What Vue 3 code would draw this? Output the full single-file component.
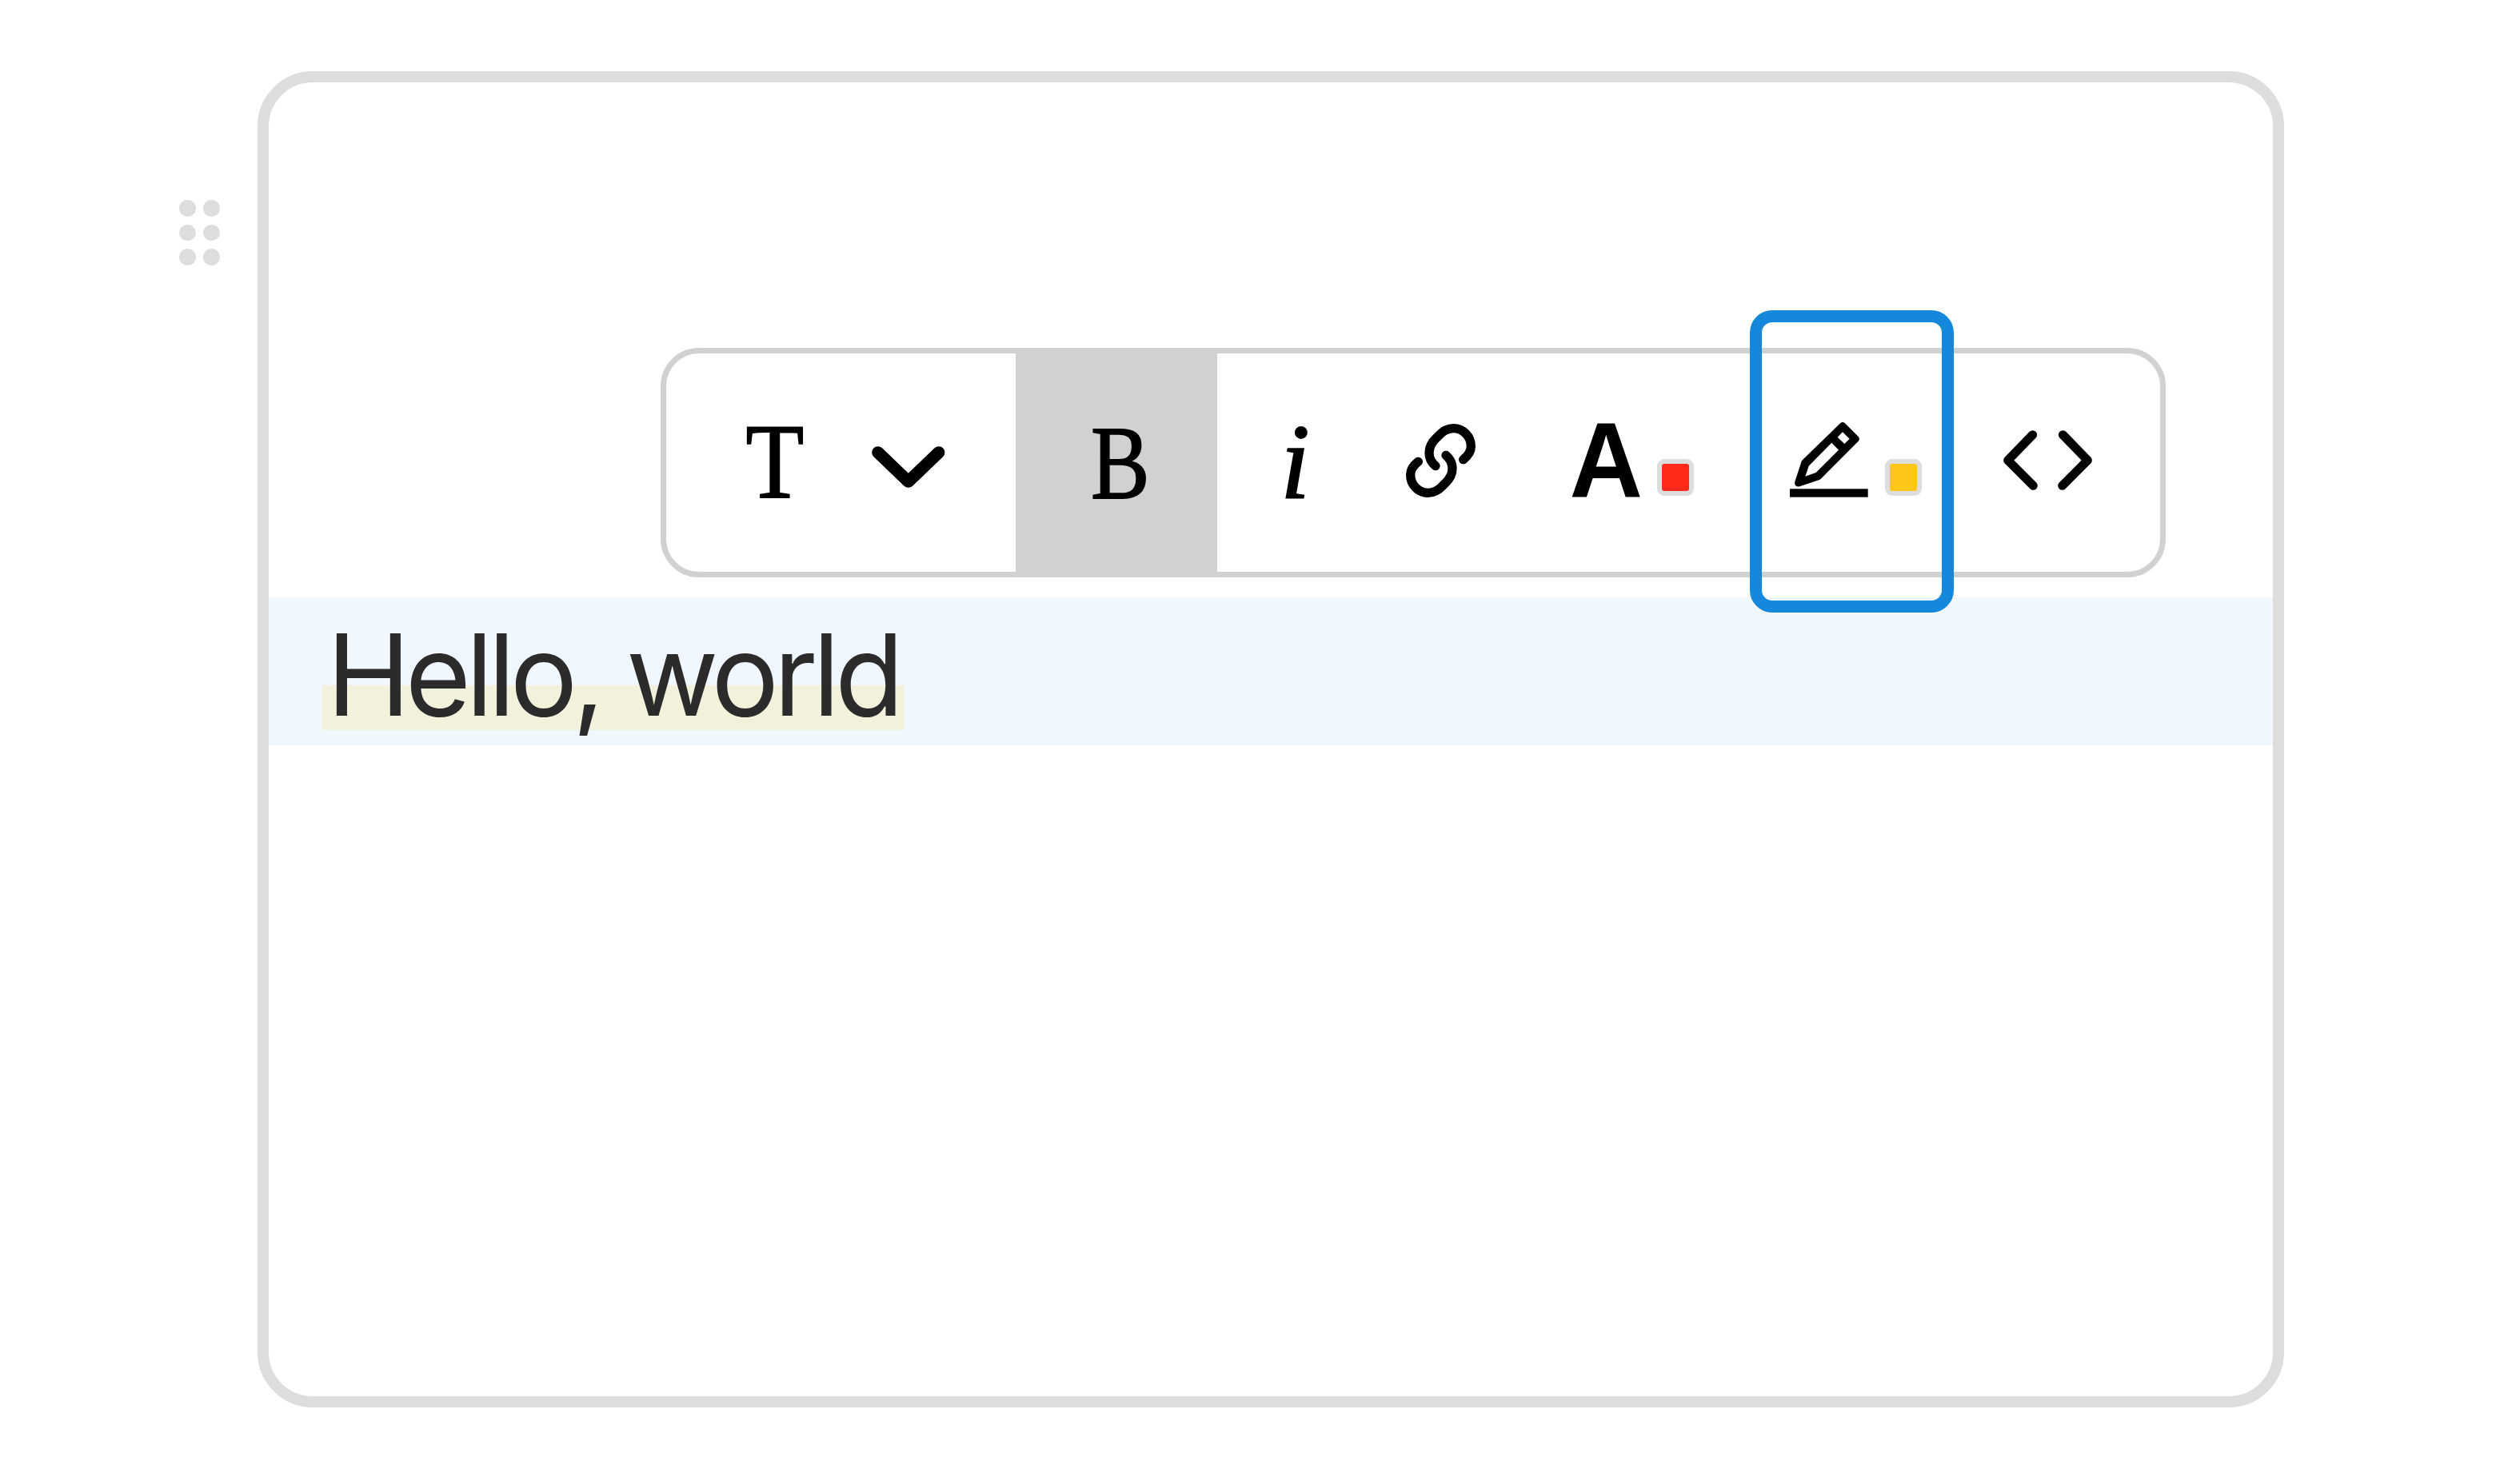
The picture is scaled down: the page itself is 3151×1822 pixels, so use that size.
<script setup>
import { ref } from 'vue'

const bold = ref(true)
const textColor = ref('#ff2a1a')
const highlightColor = ref('#ffc61a')
</script>

<template>
  <div class="page">
    <!-- drag handle -->
    <div class="handle">
      <span v-for="n in 6" :key="n" class="dot"></span>
    </div>

    <div class="card">
      <div class="toolbar">
        <button class="tool style">
          <svg class="glyph" width="71" height="89">
            <text class="serif" transform="translate(-1.5 88.5) scale(.895 1)">T</text>
          </svg>
          <svg class="chevron" width="92" height="52" viewBox="0 0 92 52">
            <path d="M7.8 7.8L45.8 44.2L83.8 7.8" stroke-width="15.2" />
          </svg>
        </button>

        <button class="tool bold" :class="{ active: bold }" @click="bold = !bold">
          <svg class="glyph" width="66" height="87">
            <text class="serif" transform="translate(1 88) scale(.83 .99)">B</text>
          </svg>
        </button>

        <button class="tool italic">
          <svg class="glyph" width="31" height="87">
            <text class="serif slanted" transform="translate(-5 86.5)">i</text>
          </svg>
        </button>

        <button class="tool link">
          <svg width="87" height="92" viewBox="174 150 261 276">
            <g stroke-width="34">
              <path d="M285 308C268 294 261 278 261 259C261 237 270 220 288 203L297 194C313 177 330 167 352 167C388 167 418 197 418 234C418 254 407 270 389 284" />
              <path d="M324 268C341 282 348 298 348 317C348 339 339 356 321 373L312 382C296 399 279 409 257 409C221 409 191 379 191 342C191 322 202 306 220 292" />
            </g>
          </svg>
        </button>

        <button class="tool color">
          <svg class="glyph" width="85" height="92">
            <text class="sans" transform="translate(-2.5 92) scale(.95 1)">A</text>
          </svg>
          <span class="swatch" :style="{ backgroundColor: textColor }"></span>
        </button>

        <button class="tool highlight">
          <svg width="98" height="94" viewBox="235 476 294 282">
            <path class="solid" fill-rule="evenodd" d="M424 480Q433 472 442 480L492 530Q499 538 492 547L351 689L346 692L272 717Q262 719 256 713Q252 707 254 699L279 622L283 617ZM433 513L414 532L440 557L459 538ZM392 553L306 640L293 679L333 665L418 580Z" />
            <rect class="solid" x="235" y="726" width="293" height="31" />
          </svg>
          <span class="swatch" :style="{ backgroundColor: highlightColor }"></span>
          <span class="ring"></span>
        </button>

        <button class="tool code">
          <svg width="111" height="75" viewBox="195 384 333 225">
            <path d="M305 401L212 497L307 592M418 401L511 497L416 592" stroke-width="33" />
          </svg>
        </button>
      </div>

      <div class="line">
        <span class="marked">Hello, world</span>
      </div>
    </div>
  </div>
</template>

<style>
body {
  background: #fff;
}
</style>

<style scoped>
.page {
  --border-col: #ddd;
  --toolbar-col: #d1d1d1;

  box-sizing: border-box;
  display: flex;
  align-items: flex-start;
  width: 3151px;
  height: 1822px;
  padding: 89px 0 0 224px;
  overflow: hidden;
}

.handle {
  display: grid;
  grid-template-columns: repeat(2, 20.6px);
  gap: 10.1px 9.4px;
  width: 98px;
  padding-top: 161px;
}

.dot {
  width: 20.6px;
  height: 20.6px;
  border-radius: 50%;
  background: var(--border-col);
}

.card {
  box-sizing: border-box;
  width: 2534px;
  height: 1671px;
  border: 14px solid var(--border-col);
  border-radius: 69px;
}

.toolbar {
  box-sizing: border-box;
  display: flex;
  width: 1882px;
  height: 287px;
  margin: 332px 0 25px 490px;
  border: 7px solid var(--toolbar-col);
  border-radius: 48px;
}

/* icons share one bottom line, 93px above the inner edge */
.tool {
  box-sizing: border-box;
  display: flex;
  flex: none;
  align-items: flex-end;
  justify-content: center;
  position: relative;
  margin: 0;
  padding: 0 0 93px;
  border: 0;
  background: none;
}

.active {
  background: var(--toolbar-col);
}

.style {
  width: 437px;
  gap: 85px;
  padding-right: 88px;
  padding-left: 101px;
  justify-content: flex-start;
}

.chevron {
  margin-bottom: 12px;
}

.bold {
  width: 252px;
}

.italic {
  width: 198px;
}

.link {
  width: 163px;
}

.color {
  width: 316px;
  gap: 22px;
}

.highlight {
  width: 242px;
  gap: 21px;
  justify-content: flex-start;
  padding-left: 39px;
}

.code {
  width: 239px;
  padding-bottom: 102px;
}

svg {
  display: block;
  flex: none;
  overflow: visible;
}

path {
  fill: none;
  stroke: #000;
  stroke-linecap: round;
  stroke-linejoin: round;
}

.solid {
  fill: #000;
  stroke: none;
}

.serif {
  font: 133px "Liberation Serif", serif;
  stroke: #000;
  stroke-width: 1.8px;
}

.slanted {
  font-style: italic;
}

.sans {
  font: bold 133.5px "Liberation Sans", sans-serif;
}

.swatch {
  box-sizing: border-box;
  width: 46px;
  height: 46px;
  margin-bottom: 2px;
  border: 6px solid var(--border-col);
  border-radius: 9px;
}

.ring {
  box-sizing: border-box;
  position: absolute;
  top: -54px;
  left: -11px;
  width: 255px;
  height: 378px;
  border: 15px solid #1588dc;
  border-radius: 28px;
}

.line {
  display: flex;
  height: 185px;
  padding-left: 67px;
  background: #f0f7fe;
}

/* marker stroke covers only the lower part of the text */
.marked {
  box-sizing: border-box;
  width: 728px;
  height: 185px;
  padding-left: 5.5px;
  background: linear-gradient(#f3f0dc, #f3f0dc) 0 110px / 100% 56px no-repeat;
  color: #2b2b2b;
  font: 141px/194px Inter, sans-serif;
  letter-spacing: -6.5px;
  white-space: nowrap;
}
</style>
